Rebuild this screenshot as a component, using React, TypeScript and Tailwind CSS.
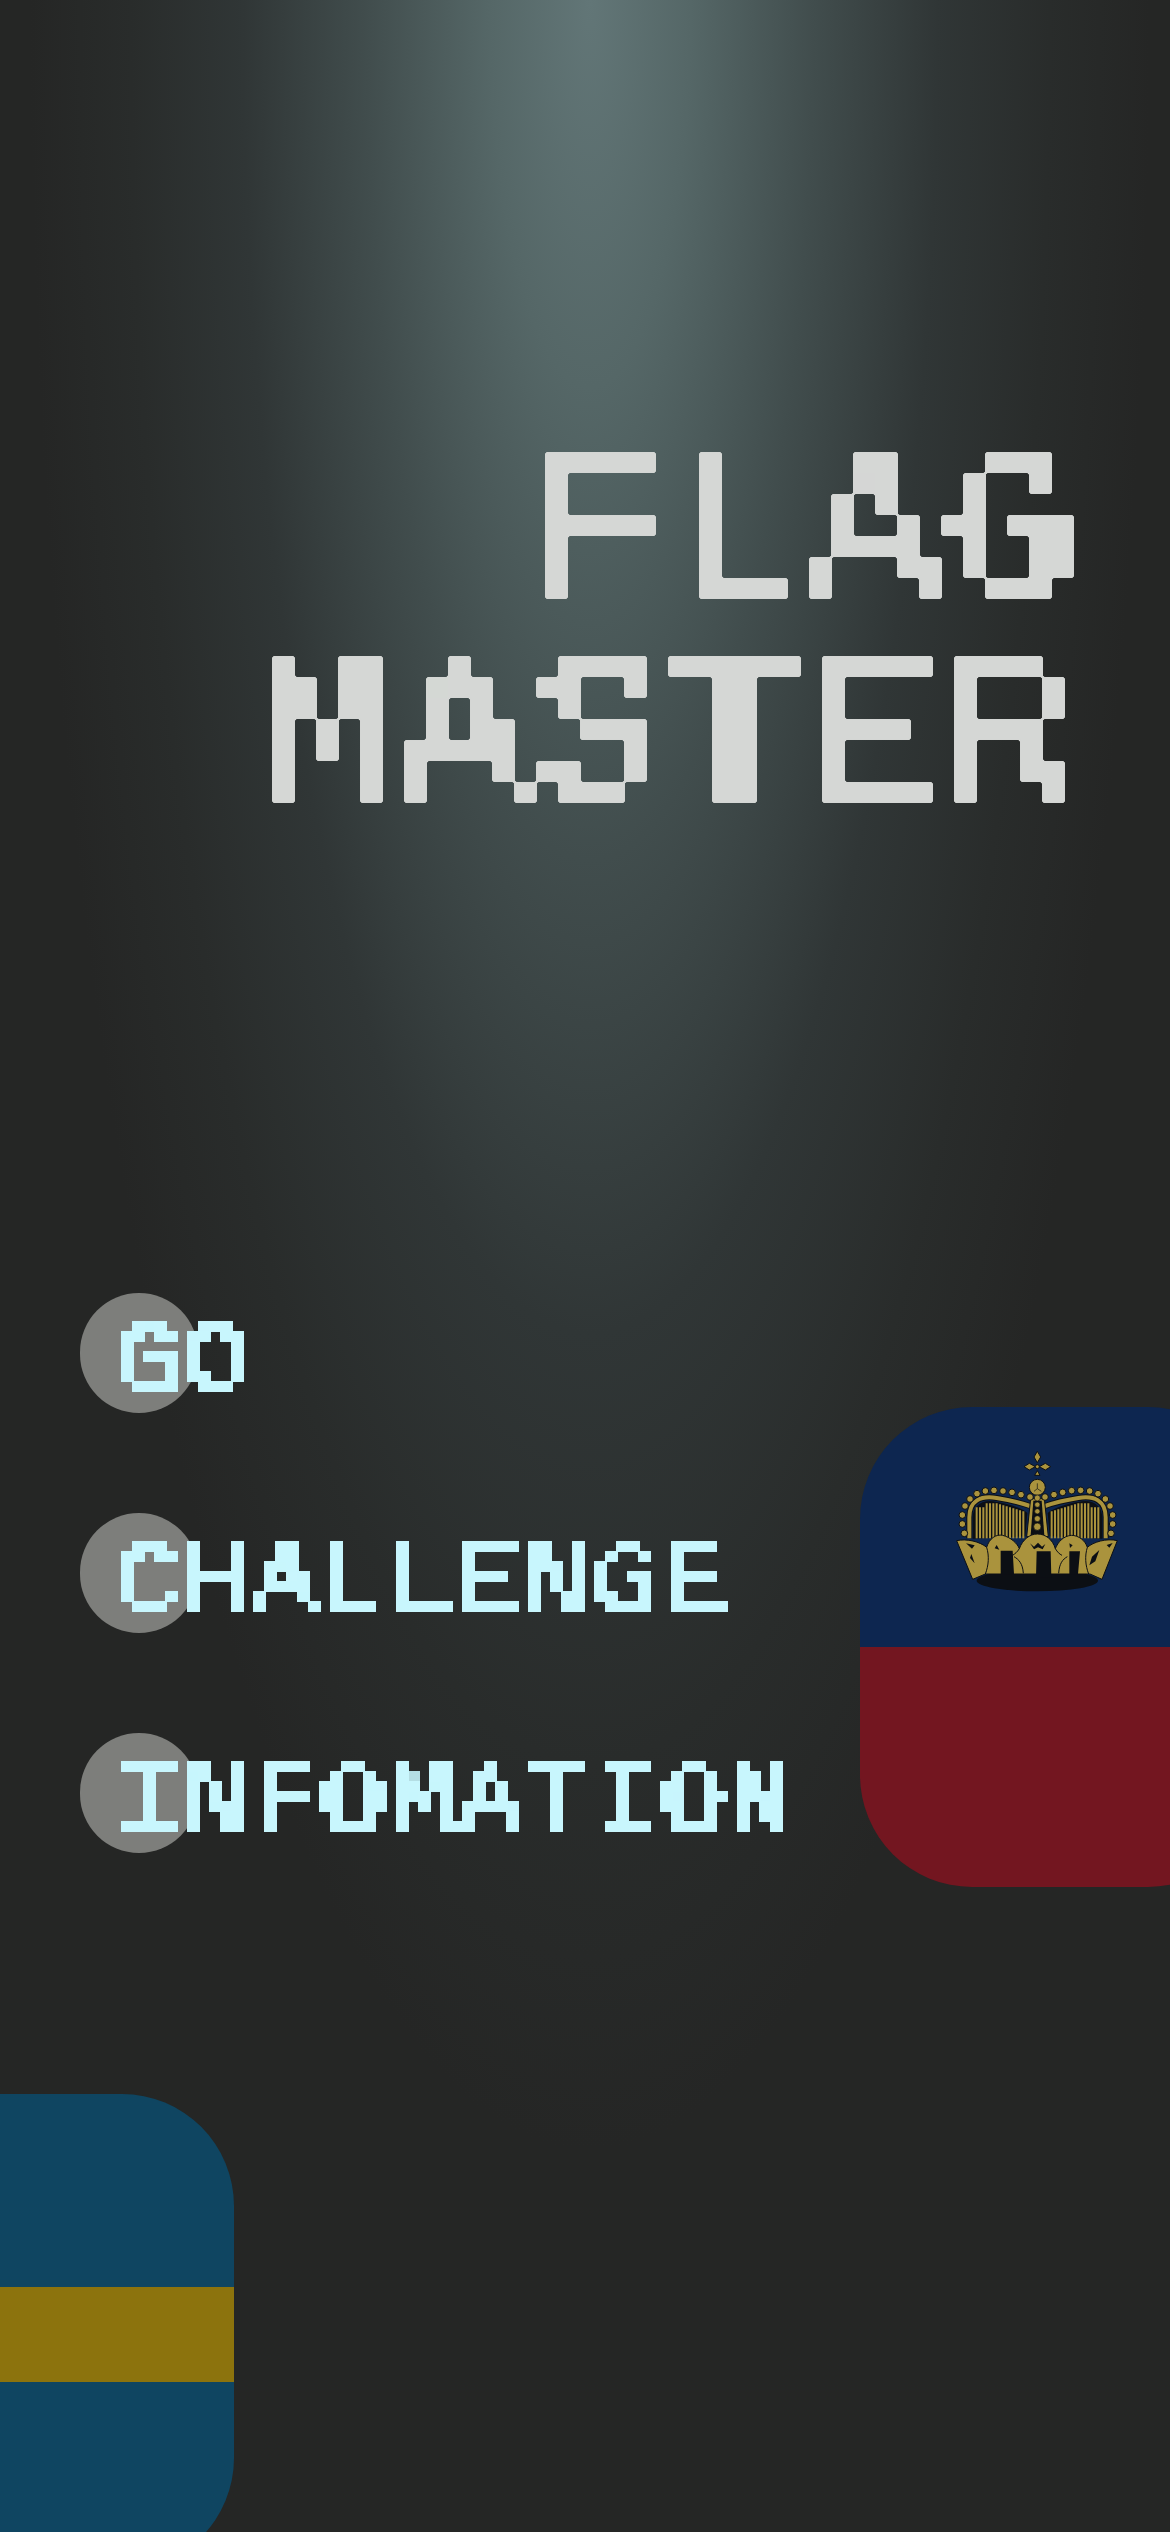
const arcDots = [
  [103, 310], [97, 282], [97, 255], [105, 228], [120, 207], [141, 191], [166, 183], [192, 181], [219, 183], [246, 187], [273, 194], [300, 201],
  [345, 201], [372, 194], [398, 187], [425, 182], [452, 181], [479, 183], [504, 191], [526, 207], [540, 228], [548, 255], [548, 282], [543, 310],
];
const leftStripes = [140, 150, 160, 170, 180, 190, 200, 210, 220, 230, 240, 250, 260, 270, 280];
const rightStripes = [365, 375, 385, 395, 405, 415, 425, 435, 445, 455, 465, 475, 485, 495, 505];
const GOLD = "#aa933d";
const INK = "#0c0f14";

function Crown() {
  return (
    <svg viewBox="0 0 660 540" className="absolute left-[70px] top-[23px] h-[180px] w-[220px]">
      {/* cross and orb */}
      <g fill={GOLD} stroke={INK} strokeWidth="3">
        <path d="M322 64l10 17-10 17-10-17z" />
        <path d="M282 110l16-10 18 10-18 10z" />
        <path d="M362 110l-16-10-18 10 18 10z" />
        <path d="M322 122l8 14-16 0z" />
        <circle cx="322" cy="110" r="6" />
        <circle cx="322" cy="172" r="24" />
      </g>
      <path d="M322 160v16l12 8M322 176l-10 8" fill="none" stroke={INK} strokeWidth="2" />
      {/* striped panels */}
      <path d="M128 326V265c0-40 30-58 70-50 40 6 78 20 94 34l-6 70z" fill={INK} />
      <path d="M517 326V265c0-40-30-58-70-50-40 6-78 20-94 34l6 70z" fill={INK} />
      {leftStripes.map((x) => (
        <line key={x} x1={x} x2={x} y1={x < 170 ? 232 : 220 + Math.max(0, x - 200) * 0.3} y2="325" stroke={GOLD} strokeWidth="6" />
      ))}
      {rightStripes.map((x) => (
        <line key={x} x1={x} x2={x} y1={x > 475 ? 232 : 220 + Math.max(0, 445 - x) * 0.3} y2="325" stroke={GOLD} strokeWidth="6" />
      ))}
      {/* arch bands */}
      <path d="M118 325V262c0-50 34-66 82-58 38 6 72 14 100 24" fill="none" stroke={INK} strokeWidth="18" />
      <path d="M527 325V262c0-50-34-66-82-58-38 6-72 14-100 24" fill="none" stroke={INK} strokeWidth="18" />
      <path d="M118 325V262c0-50 34-66 82-58 38 6 72 14 100 24" fill="none" stroke={GOLD} strokeWidth="12" />
      <path d="M527 325V262c0-50-34-66-82-58-38 6-72 14-100 24" fill="none" stroke={GOLD} strokeWidth="12" />
      <path d="M302 206L290 320H355L343 206z" fill={GOLD} stroke={INK} strokeWidth="3" />
      <path d="M310 212L302 316H343L335 212z" fill={INK} />
      {arcDots.map(([cx, cy]) => (
        <circle key={`${cx}-${cy}`} cx={cx} cy={cy} r="10" fill={GOLD} stroke={INK} strokeWidth="3" />
      ))}
      <g fill={GOLD} stroke={INK} strokeWidth="2">
        <circle cx="322" cy="204" r="9" />
        <circle cx="322" cy="224" r="8" />
        <circle cx="322" cy="244" r="8" />
        <circle cx="322" cy="266" r="9" />
        <circle cx="322" cy="290" r="11" />
      </g>
      {/* band and lobes */}
      <ellipse cx="322" cy="452" rx="182" ry="32" fill={INK} />
      <path
        d="M80 332C110 325 150 335 170 352C178 325 198 312 218 316C242 322 262 340 268 356C278 328 300 312 322 312C346 312 368 328 376 356C384 336 400 318 424 316C446 316 466 332 472 352C490 336 530 324 562 332L516 448L480 432H166L128 448Z"
        fill={GOLD}
        stroke={INK}
        strokeWidth="3"
      />
      <path d="M212 362h36l4 70h-40zM320 364h42l2 78h-46zM418 364h32l-6 68h-26z" fill={INK} />
      <path d="M170 352c8 26 6 54-4 80M472 352c-8 26-6 54 4 80M268 356c-6 10-14 16-20 20M376 356c6 10 12 16 20 20M252 380c14 8 26 20 28 50M412 380c-14 8-24 20-26 50" fill="none" stroke={INK} strokeWidth="3" />
      <g fill={INK}>
        <path d="M108 340l26 6-8 10zM124 372l10 28-14-16zM300 340l12 10 12-12 12 12 10-8-8 16-14-6-12 6zM200 345l8 14-14-4zM418 340l10 6-8 8zM486 380l22-20-12 34-18 12zM530 345l18-6-10 14z" />
      </g>
    </svg>
  );
}

function MenuItem({ label }: { label: string }) {
  return (
    <div className="relative flex h-[120px] items-center pl-[36px]">
      <div className="absolute left-0 top-0 h-[120px] w-[118px] rounded-full bg-[#7d7e7b]" />
      <span className="relative mt-[24px] inline-block whitespace-nowrap [filter:url(#pixel-sm)]">
        <span className="inline-block scale-y-[0.9] font-['Liberation_Mono',monospace] text-[110px] leading-[120px] tracking-[2px] text-[#c8f6fd] [-webkit-text-stroke:2.5px_#c8f6fd]">
          {label}
        </span>
      </span>
    </div>
  );
}

function TitleLine({ text }: { text: string }) {
  return (
    <span className="block h-[204px] whitespace-nowrap">
      <span className="inline-block [filter:url(#pixel-lg)]">
        <span className="inline-block scale-y-[0.92]">{text}</span>
      </span>
    </span>
  );
}

export default function App() {
  return (
    <div className="relative flex h-[2532px] w-[1170px] flex-col overflow-hidden bg-[#252625] bg-[radial-gradient(ellipse_560px_2150px_at_590px_0px,#627677_0%,#556767_18%,#414d4d_40%,#303636_62%,#292c2b_82%,#252625_100%)]">
      <svg className="absolute h-0 w-0">
        <defs>
          <filter id="pixel-lg" x="0" y="0" width="100%" height="100%" colorInterpolationFilters="sRGB">
            <feFlood x="23" y="6" width="1" height="1" />
            <feComposite width="22.75" height="21" />
            <feTile result="grid" />
            <feComposite in="SourceGraphic" in2="grid" operator="in" />
            <feMorphology operator="dilate" radius="11 10" />
            <feComponentTransfer>
              <feFuncA type="linear" slope="60" intercept="-25" />
            </feComponentTransfer>
            <feGaussianBlur stdDeviation="1.5" />
            <feComponentTransfer>
              <feFuncA type="linear" slope="8" intercept="-3.5" />
            </feComponentTransfer>
          </filter>
          <filter id="pixel-sm" x="0" y="0" width="100%" height="100%" colorInterpolationFilters="sRGB">
            <feFlood x="11" y="1" width="1" height="1" />
            <feComposite width="11.33" height="10.5" />
            <feTile result="grid" />
            <feComposite in="SourceGraphic" in2="grid" operator="in" />
            <feMorphology operator="dilate" radius="6 5" />
            <feComponentTransfer>
              <feFuncA type="linear" slope="60" intercept="-25" />
            </feComponentTransfer>
          </filter>
        </defs>
      </svg>

      <h1 className="pr-[91px] pt-[435px] text-right font-['Liberation_Mono',monospace] text-[220px] font-normal leading-[204px] tracking-[4.5px] text-[#d5d7d5] [-webkit-text-stroke:5px_#d5d7d5]">
        <TitleLine text="FLAG" />
        <TitleLine text="MASTER" />
      </h1>

      <nav className="ml-[80px] mt-[450px] flex flex-col gap-[100px]">
        <MenuItem label="GO" />
        <MenuItem label="CHALLENGE" />
        <MenuItem label="INFOMATION" />
      </nav>

      <div className="absolute left-[860px] top-[1407px] flex h-[480px] w-[400px] flex-col overflow-hidden rounded-[112px]">
        <div className="h-[240px] bg-[#0d2650]" />
        <div className="h-[240px] bg-[#731620]" />
        <Crown />
      </div>

      <div className="absolute left-[-160px] top-[2094px] flex h-[476px] w-[394px] flex-col overflow-hidden rounded-[112px] bg-[#0f4561]">
        <div className="mt-[193px] h-[95px] bg-[#8c730d]" />
      </div>
    </div>
  );
}
